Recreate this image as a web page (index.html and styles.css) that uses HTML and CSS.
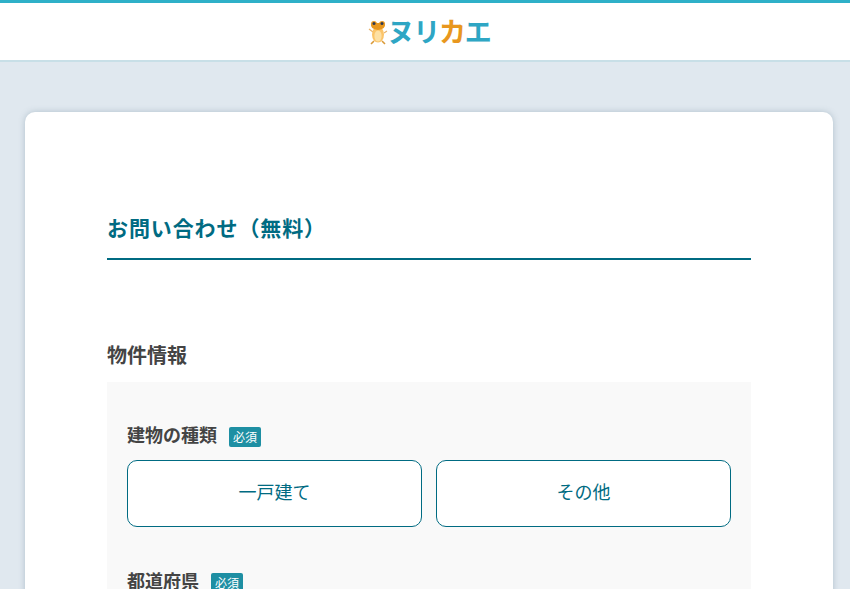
FILE: index.html
```html
<!DOCTYPE html>
<html lang="ja">
<head>
<meta charset="utf-8">
<title>お問い合わせ</title>
<link rel="stylesheet" href="styles.css">
</head>
<body>
<header class="site-header">
  <div class="logo">
    <svg class="frog" width="22" height="26" viewBox="0 0 22 26" aria-hidden="true">
      <path d="M2 10 L6 13 M20 12 L17 14" stroke="#e9b36a" stroke-width="1.2" fill="none"/>
      <path d="M7 22 L4 25 M15 22 L18 25" stroke="#d99a3a" stroke-width="1.6" fill="none"/>
      <ellipse cx="11" cy="15.5" rx="6" ry="8" fill="#fbc469"/>
      <ellipse cx="11" cy="17" rx="3.6" ry="5.5" fill="#fde0a4"/>
      <path d="M4 5 Q4 2 7 2 Q9 2 10 4 L12 4 Q13 2 15 2 Q18 2 18 5 Q19 10 11 11 Q3 10 4 5Z" fill="#e8971e"/>
      <circle cx="7" cy="4.6" r="1.5" fill="#2d3a55"/>
      <circle cx="15" cy="4.6" r="1.5" fill="#2d3a55"/>
    </svg>
    <span class="logo-text"><span class="blue">ヌリ</span><span class="orange">カ</span><span class="blue">エ</span></span>
  </div>
</header>
<main class="page">
  <section class="card">
    <h1 class="title">お問い合わせ（無料）</h1>
    <h2 class="section-title">物件情報</h2>
    <div class="panel">
      <div class="field">
        <div class="label-row"><span class="label">建物の種類</span><span class="badge">必須</span></div>
        <div class="options">
          <button class="option" type="button">一戸建て</button>
          <button class="option" type="button">その他</button>
        </div>
      </div>
      <div class="field">
        <div class="label-row"><span class="label">都道府県</span><span class="badge">必須</span></div>
      </div>
    </div>
  </section>
</main>
</body>
</html>
```
FILE: styles.css
```css
html, body { margin: 0; padding: 0; height: 589px; overflow: hidden; }
body { background: #e0e8ef; font-family: "Noto Sans CJK JP", "Noto Sans", sans-serif; color: #444; }
.site-header {
  box-sizing: border-box; height: 62px; background: #fff;
  border-top: 3px solid #2fb0c8; border-bottom: 2px solid #c8dfe7;
  display: flex; align-items: center; justify-content: center;
}
.logo { display: flex; align-items: center; gap: 0; margin-left: 7px; }
.frog { display: block; margin-right: -1px; }
.logo-text { font-size: 27px; font-weight: 700; line-height: 32px; letter-spacing: -1.25px; white-space: nowrap; margin-top: -2px; }
.blue { color: #2ea6c4; }
.orange { color: #e8971e; }
.page { padding: 50px 17px 0 25px; }
.card {
  background: #fff; border-radius: 10px; box-shadow: 0 0 6px rgba(90, 120, 140, .35);
  padding: 100px 82px 0; height: 600px; box-sizing: border-box;
}
.title {
  margin: 0; height: 46px; line-height: 30px; font-size: 21px; font-weight: 700; color: #006b82;
  border-bottom: 2px solid #006b82; letter-spacing: .9px;
}
.section-title { margin: 78px 0 0; font-size: 20px; font-weight: 700; line-height: 34px; height: 44px; color: #444; }
.panel { background: #f9f9f9; padding: 36px 20px 0; height: 300px; }
.field { margin-bottom: 37px; }
.label-row { display: flex; align-items: center; gap: 12px; height: 42px; box-sizing: border-box; padding-bottom: 4px; }
.label { font-size: 18px; font-weight: 700; color: #444; line-height: 26px; margin-bottom: 6px; }
.badge {
  width: 32px; height: 20px; line-height: 20px; text-align: center; background: #1e8fa3;
  color: #fff; font-size: 12px; border-radius: 2px;
}
.options { display: flex; gap: 14px; }
.option {
  flex: 1; height: 67px; background: #fff; border: 1px solid #006b82; border-radius: 10px;
  color: #006b82; font: 400 18px "Noto Sans CJK JP", sans-serif; padding: 0 0 6px;
}
```
